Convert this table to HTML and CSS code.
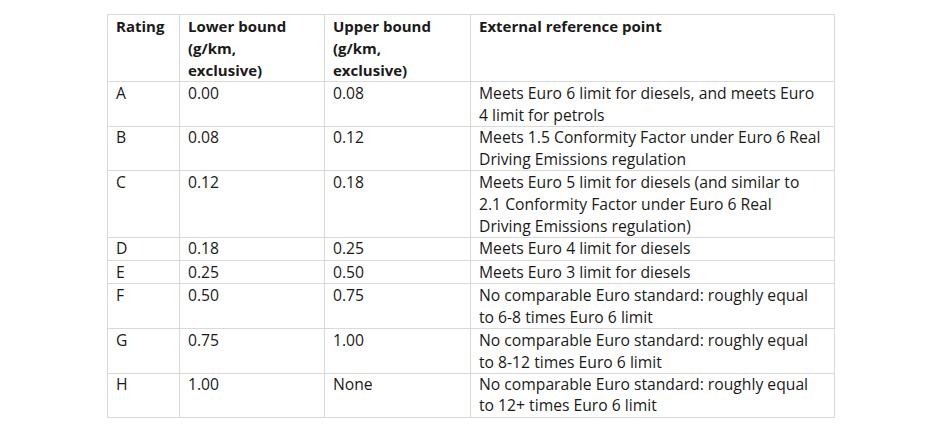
FILE: index.html
```html
<!DOCTYPE html>
<html>
<head>
<meta charset="utf-8">
<link rel="stylesheet" href="styles.css">
</head>
<body>
<div class="page">
<table class="ratings">
  <colgroup>
    <col class="c1"><col class="c2"><col class="c3"><col class="c4">
  </colgroup>
  <thead>
    <tr>
      <th>Rating</th>
      <th>Lower bound<br>(g/km,<br>exclusive)</th>
      <th>Upper bound<br>(g/km,<br>exclusive)</th>
      <th>External reference point</th>
    </tr>
  </thead>
  <tbody>
    <tr><td>A</td><td>0.00</td><td>0.08</td><td>Meets Euro 6 limit for diesels, and meets Euro<br>4 limit for petrols</td></tr>
    <tr class="tight"><td>B</td><td>0.08</td><td>0.12</td><td>Meets 1.5 Conformity Factor under Euro 6 Real<br>Driving Emissions regulation</td></tr>
    <tr><td>C</td><td>0.12</td><td>0.18</td><td>Meets Euro 5 limit for diesels (and similar to<br>2.1 Conformity Factor under Euro 6 Real<br>Driving Emissions regulation)</td></tr>
    <tr class="tight"><td>D</td><td>0.18</td><td>0.25</td><td>Meets Euro 4 limit for diesels</td></tr>
    <tr><td>E</td><td>0.25</td><td>0.50</td><td>Meets Euro 3 limit for diesels</td></tr>
    <tr><td>F</td><td>0.50</td><td>0.75</td><td>No comparable Euro standard: roughly equal<br>to 6-8 times Euro 6 limit</td></tr>
    <tr><td>G</td><td>0.75</td><td>1.00</td><td>No comparable Euro standard: roughly equal<br>to 8-12 times Euro 6 limit</td></tr>
    <tr class="tight"><td>H</td><td>1.00</td><td>None</td><td>No comparable Euro standard: roughly equal<br>to 12+ times Euro 6 limit</td></tr>
  </tbody>
</table>
</div>
</body>
</html>
```

FILE: styles.css
```css
html, body {
  margin: 0;
  background: #ffffff;
}
.page {
  padding: 14px 0 0 107px;
}
.ratings {
  border-collapse: collapse;
  font-family: "Open Sans", Lato, sans-serif;
  font-size: 15.7px;
  line-height: 22px;
  color: #1a1a1a;
  table-layout: fixed;
  width: 727px;
}
.c1 { width: 72px; }
.c2 { width: 145px; }
.c3 { width: 146px; }
.c4 { width: 364px; }
.ratings th,
.ratings td {
  border: 1px solid #d9d9d9;
  padding: 0 4px 0 8px;
  text-align: left;
  vertical-align: top;
  white-space: nowrap;
}
.ratings th {
  font-size: 15px;
  font-weight: 700;
}
.ratings .tight td {
  line-height: 21.5px;
}
```
